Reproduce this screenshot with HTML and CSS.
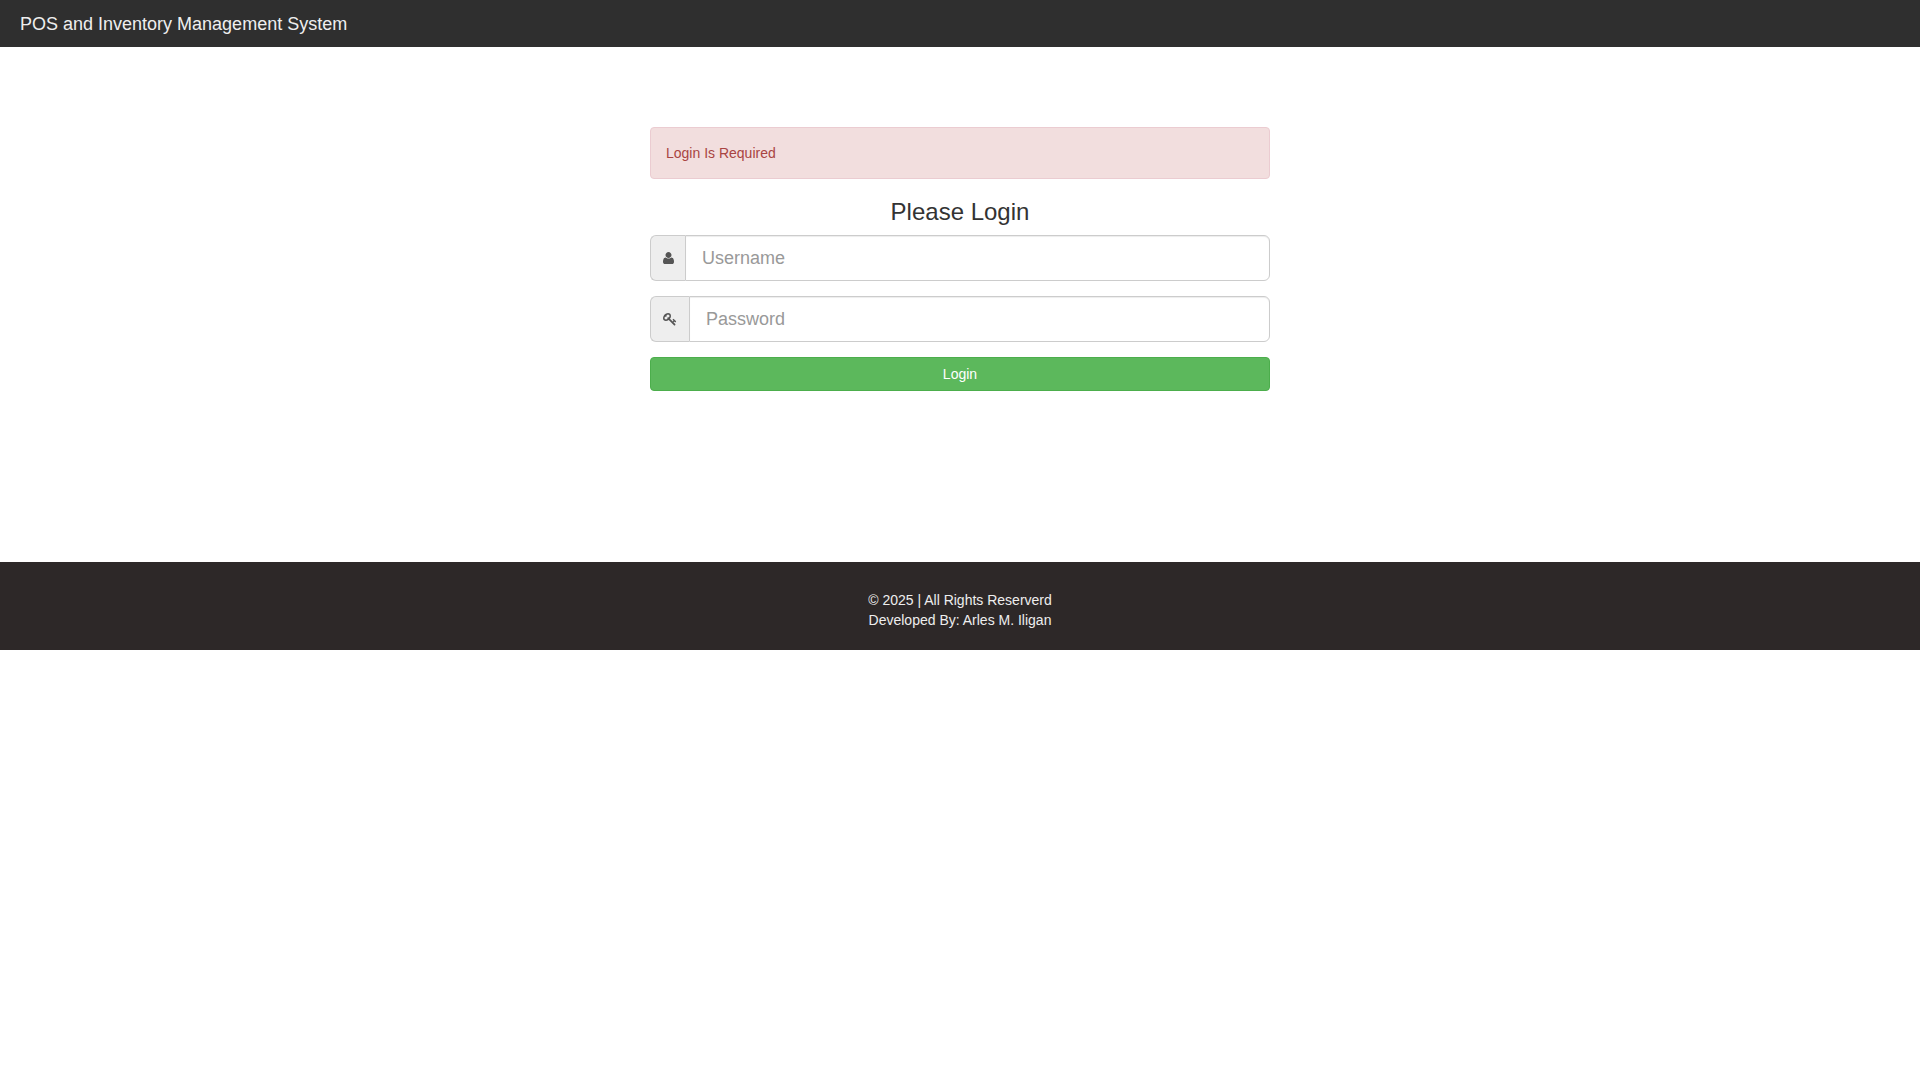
FILE: index.html
```html
<!DOCTYPE html>
<html lang="en">
<head>
    <meta charset="UTF-8">
    <meta name="viewport" content="width=device-width, initial-scale=1.0">
    <title>POS and Inventory Management System</title>
    <link rel="stylesheet" href="styles.css">
</head>
<body>
    <nav class="navbar">
        <a class="navbar-brand" href="#">POS and Inventory Management System</a>
    </nav>

    <main class="login-container">
        <div class="alert">Login Is Required</div>
        <h3 class="login-title">Please Login</h3>
        <form>
            <div class="input-group">
                <span class="addon addon-user">
                    <svg class="icon" viewBox="0 0 1408 1536" width="11" height="12" fill="currentColor"><path d="M1408 1277q0 120-73 189.5t-194 69.5h-874q-121 0-194-69.5t-73-189.5q0-53 3.5-103.5t14-109 26.5-108.5 43-97.5 62-81 85.5-53.5 111.5-20q9 0 42 21.5t74.5 48 108 48 133.5 21.5 133.5-21.5 108-48 74.5-48 42-21.5q61 0 111.5 20t85.5 53.5 62 81 43 97.5 26.5 108.5 14 109 3.5 103.5zm-320-893q0 159-112.5 271.5t-271.5 112.5-271.5-112.5-112.5-271.5 112.5-271.5 271.5-112.5 271.5 112.5 112.5 271.5z"/></svg>
                </span>
                <input class="form-control" type="text" placeholder="Username">
            </div>
            <div class="input-group">
                <span class="addon addon-key">
                    <svg class="icon" viewBox="0 0 1792 1792" width="14" height="14" fill="currentColor"><path d="M832 512q0-80-56-136t-136-56-136 56-56 136q0 42 19 83-41-19-83-19-80 0-136 56t-56 136 56 136 136 56 136-56 56-136q0-42-19-83 41 19 83 19 80 0 136-56t56-136zm851 704q0 17-49 66t-66 49q-9 0-28.5-16t-36.5-33-38.5-40-24.5-26l-96 96 220 220q28 28 28 68 0 42-39 81t-81 39q-40 0-68-28l-671-671q-176 131-365 131-163 0-265.5-102.5t-102.5-265.5q0-160 95-313t248-248 313-95q163 0 265.5 102.5t102.5 265.5q0 189-131 365l355 355 96-96q-3-3-26-24.5t-40-38.5-33-36.5-16-28.5q0-17 49-66t66-49q13 0 23 10 6 6 46 44.5t82 79.5 86.5 86 73 78 28.5 41z"/></svg>
                </span>
                <input class="form-control" type="password" placeholder="Password">
            </div>
            <button class="btn-login" type="button">Login</button>
        </form>
    </main>

    <footer>
        <p>© 2025 | All Rights Reserverd</p>
        <p>Developed By: Arles M. Iligan</p>
    </footer>
</body>
</html>
```

FILE: styles.css
```css
* {
    box-sizing: border-box;
}

body {
    font-family: "Liberation Sans", Arial, sans-serif;
    font-size: 14px;
    line-height: 20px;
    margin: 0;
    background-color: #fff;
    color: #333;
}

.navbar {
    background-color: #2f2f2f;
    height: 47px;
    padding: 0 20px;
}

.navbar-brand {
    display: block;
    color: #eee;
    font-size: 18px;
    line-height: 20px;
    padding: 14px 0 13px;
    text-decoration: none;
}

.login-container {
    width: 620px;
    margin: 0 auto;
    padding: 80px 0 171px;
}

.alert {
    height: 52px;
    padding: 15px;
    margin-bottom: 20px;
    background-color: #f2dede;
    border: 1px solid #ebccd1;
    border-radius: 4px;
    color: #a94442;
}

.login-title {
    margin: 0 0 10px;
    font-size: 24px;
    font-weight: 500;
    line-height: 26.4px;
    text-align: center;
}

.input-group {
    display: flex;
    height: 46px;
    margin-bottom: 15px;
}

.addon {
    display: flex;
    align-items: center;
    padding: 0 12px;
    background-color: #eee;
    border: 1px solid #ccc;
    border-right: 0;
    border-radius: 6px 0 0 6px;
    color: #555;
}

.addon-user {
    width: 35px;
}

.addon-key {
    width: 39px;
}

.icon {
    flex: none;
}

.form-control {
    flex: 1;
    min-width: 0;
    height: 46px;
    padding: 10px 16px;
    background-color: #fff;
    border: 1px solid #ccc;
    border-radius: 0 6px 6px 0;
    box-shadow: inset 0 1px 1px rgba(0, 0, 0, .075);
    color: #555;
    font-family: inherit;
    font-size: 18px;
    line-height: 24px;
    outline: none;
}

.form-control::placeholder {
    color: #999;
    opacity: 1;
}

.btn-login {
    display: block;
    width: 100%;
    height: 34px;
    padding: 6px 12px;
    background-color: #5cb85c;
    border: 1px solid #4cae4c;
    border-radius: 4px;
    color: #fff;
    font-family: inherit;
    font-size: 14px;
    line-height: 20px;
    cursor: pointer;
}

footer {
    background-color: #2d2828;
    color: #eee;
    padding: 28px 0 20px;
    text-align: center;
}

footer p {
    margin: 0;
}
```
